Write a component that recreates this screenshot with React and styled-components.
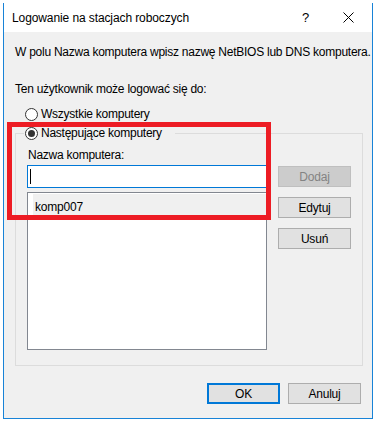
import React from 'react';
import styled, { createGlobalStyle } from 'styled-components';

const GlobalStyle = createGlobalStyle`
  html, body {
    margin: 0;
    padding: 0;
    background: #ffffff;
  }
  body {
    font-family: "Liberation Sans", Arial, sans-serif;
    font-size: 12px;
    color: #000;
  }
`;

const Page = styled.div`
  width: 375px;
  height: 422px;
  padding: 3px 0 0 3px;
  box-sizing: border-box;
  overflow: hidden;
`;

const Dialog = styled.div`
  position: relative;
  width: 370px;
  height: 416px;
  box-sizing: border-box;
  border: 1px solid #1883d7;
  border-top: none;
  display: flex;
  flex-direction: column;
  background: #f0f0f0;
`;

const TitleBar = styled.div`
  height: 29px;
  background: #ffffff;
  display: flex;
  align-items: center;
  padding-left: 8px;
  flex-shrink: 0;
`;

const Title = styled.div`
  flex: 1;
  font-size: 12px;
  letter-spacing: -0.1px;
`;

const HelpMark = styled.div`
  width: 12px;
  font-size: 13px;
  margin-right: 11px;
`;

const CloseBox = styled.div`
  width: 46px;
  height: 29px;
  display: flex;
  align-items: center;
  justify-content: center;
  margin-right: 1px;
`;

const Body = styled.div`
  flex: 1;
  padding: 12px 9px 0 11px;
  display: flex;
  flex-direction: column;
`;

const Text = styled.div`
  line-height: 16px;
  height: 16px;
  white-space: nowrap;
  letter-spacing: -0.25px;
  margin-top: ${p => p.$mt || 0}px;
  padding-left: ${p => p.$pl || 0}px;
`;

const RadioRow = styled.label`
  display: flex;
  align-items: center;
  height: 16px;
  gap: 3px;
  white-space: nowrap;
  letter-spacing: -0.25px;
  margin-left: ${p => p.$ml || 0}px;
  margin-top: ${p => p.$mt || 0}px;
`;

const RadioCircle = styled.span`
  position: relative;
  width: 13px;
  height: 13px;
  box-sizing: border-box;
  border: 1px solid #333;
  border-radius: 50%;
  background: #fff;
  display: inline-block;

  &::after {
    content: '';
    display: ${p => (p.$checked ? 'block' : 'none')};
    position: absolute;
    left: 2px;
    top: 2px;
    width: 7px;
    height: 7px;
    border-radius: 50%;
    background: #333;
  }
`;

const Group = styled.fieldset`
  margin: 3px 0 0 0;
  padding: 0 11px 15px 11px;
  border: 1px solid #dcdcdc;
  min-width: 0;
  height: 241px;
  box-sizing: border-box;
`;

const Legend = styled.legend`
  padding: 0 13px 0 1px;
  margin-left: -3px;
  height: 16px;
`;

const GroupInner = styled.div`
  display: flex;
  gap: 11px;
  margin-top: 6px;
`;

const LeftCol = styled.div`
  width: 240px;
  display: flex;
  flex-direction: column;
`;

const RightCol = styled.div`
  width: 73px;
  display: flex;
  flex-direction: column;
  gap: 10px;
  padding-top: 19px;
`;

const NameInput = styled.div`
  height: 23px;
  margin-top: 2px;
  box-sizing: border-box;
  border: 1px solid #0078d7;
  background: #fff;
  display: flex;
  align-items: center;
  padding-left: 2px;
`;

const Caret = styled.span`
  width: 1px;
  height: 15px;
  background: #000;
`;

const List = styled.div`
  height: 158px;
  margin-top: 4px;
  box-sizing: border-box;
  border: 1px solid #828790;
  background: #fff;
  padding: 1px 0 0 5px;
`;

const ListItem = styled.div`
  height: 26px;
  background: #f0f0f0;
  padding-left: 2px;
  display: flex;
  align-items: center;
  letter-spacing: -0.2px;
`;

const Button = styled.div`
  height: 21px;
  width: 73px;
  box-sizing: border-box;
  border: ${p => (p.$default ? '2px solid #0078d7' : p.$disabled ? '1px solid #bfbfbf' : '1px solid #adadad')};
  background: ${p => (p.$disabled ? '#cccccc' : '#e1e1e1')};
  color: ${p => (p.$disabled ? '#838383' : '#000')};
  display: flex;
  align-items: center;
  justify-content: center;
  letter-spacing: -0.2px;
`;

const Footer = styled.div`
  display: flex;
  justify-content: flex-end;
  gap: 8px;
  margin-top: 17px;
  padding-right: 2px;
`;

const Highlight = styled.div`
  position: absolute;
  left: 3px;
  top: 119px;
  width: 264px;
  height: 98px;
  box-sizing: border-box;
  border: 5px solid #ed1c24;
  pointer-events: none;
`;

const CloseIcon = () => (
  <svg width="11" height="11" viewBox="0 0 11 11">
    <path d="M0.5 0.5 L10.5 10.5 M10.5 0.5 L0.5 10.5" stroke="#000" strokeWidth="1" fill="none" />
  </svg>
);

export default function App() {
  return (
    <Page>
      <GlobalStyle />
      <Dialog>
        <TitleBar>
          <Title>Logowanie na stacjach roboczych</Title>
          <HelpMark>?</HelpMark>
          <CloseBox>
            <CloseIcon />
          </CloseBox>
        </TitleBar>
        <Body>
          <Text>W polu Nazwa komputera wpisz nazwę NetBIOS lub DNS komputera.</Text>
          <Text $mt={21}>Ten użytkownik może logować się do:</Text>
          <RadioRow $ml={10} $mt={9}>
            <RadioCircle />
            Wszystkie komputery
          </RadioRow>
          <Group>
            <Legend>
              <RadioRow>
                <RadioCircle $checked />
                Następujące komputery
              </RadioRow>
            </Legend>
            <GroupInner>
              <LeftCol>
                <Text $pl={1}>Nazwa komputera:</Text>
                <NameInput>
                  <Caret />
                </NameInput>
                <List>
                  <ListItem>komp007</ListItem>
                </List>
              </LeftCol>
              <RightCol>
                <Button $disabled>Dodaj</Button>
                <Button>Edytuj</Button>
                <Button>Usuń</Button>
              </RightCol>
            </GroupInner>
          </Group>
          <Footer>
            <Button $default>OK</Button>
            <Button>Anuluj</Button>
          </Footer>
        </Body>
        <Highlight />
      </Dialog>
    </Page>
  );
}
